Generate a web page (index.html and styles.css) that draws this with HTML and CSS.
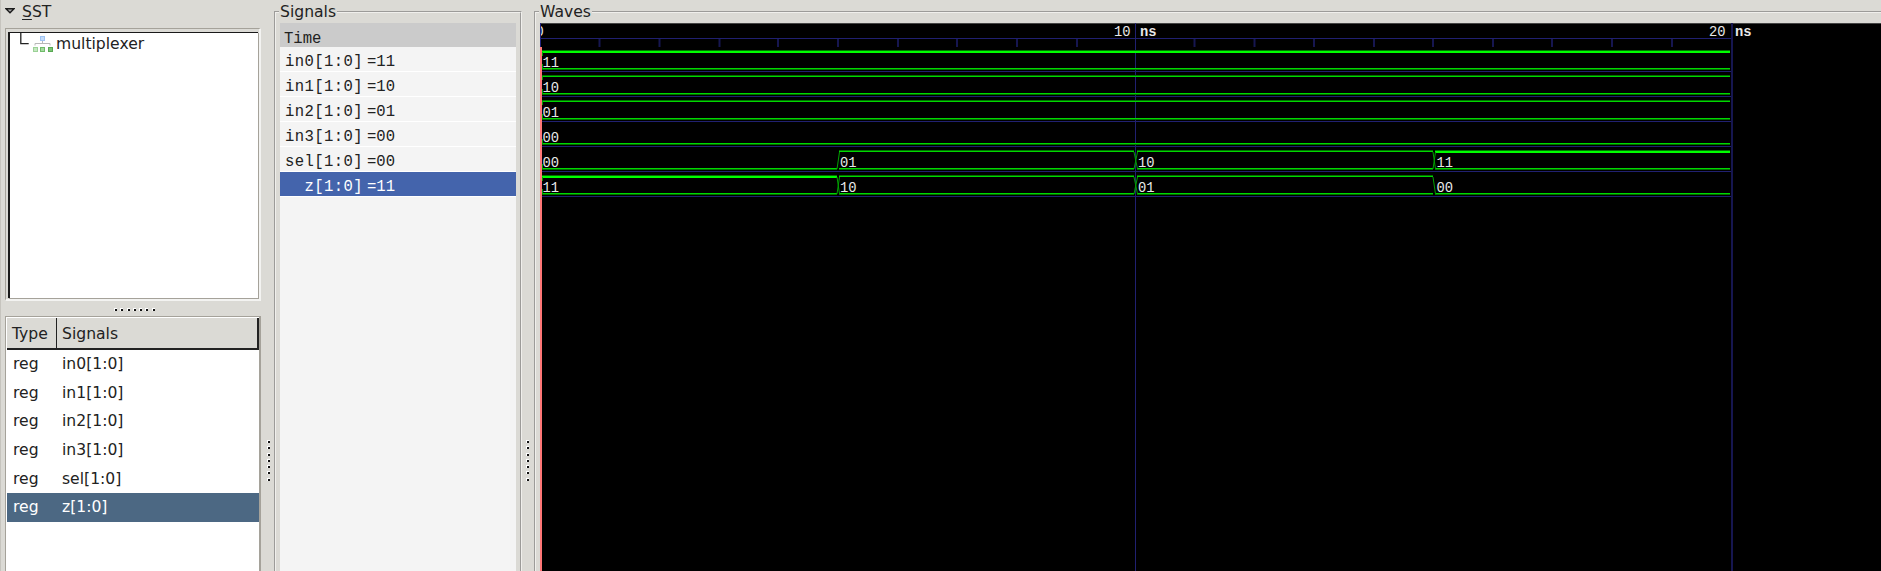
FILE: index.html
```html
<!DOCTYPE html>
<html lang="en">
<head>
<meta charset="utf-8">
<title>Waves</title>
<link rel="stylesheet" href="styles.css">
</head>
<body>
<div class="app">
  <aside class="sst">
    <div class="sst-title">
      <svg class="arrow" width="10" height="6" viewBox="0 0 10 6"><path d="M1 .8H9L5 4.8Z" fill="#aaa" stroke="#1c1c1c" stroke-width="1.4"/></svg>
      <span><u>S</u>ST</span>
    </div>
    <div class="tree">
      <div class="tree-in">
        <svg class="branch" width="43" height="22" viewBox="0 0 43 22">
          <path d="M10.8 0V10.7H18.7" fill="none" stroke="#222" stroke-width="1.3"/>
          <path d="M25 12.5V10.5H40V12.5M32.5 8V11" fill="none" stroke="#b8b8b8" stroke-width="1"/>
          <rect x="30.5" y="3.5" width="4" height="4" fill="#c5dcfa" stroke="#9fc4f3"/>
          <rect x="23.5" y="14.5" width="4" height="4" fill="#c4e8c0" stroke="#9bd196"/>
          <rect x="30.5" y="14.5" width="4" height="4" fill="#a5dba0" stroke="#70bb6a"/>
          <rect x="38.5" y="14.5" width="4" height="4" fill="#7cc576" stroke="#58a853"/>
        </svg>
        <span class="node">multiplexer</span>
      </div>
    </div>
    <div class="grip grip-h"><i></i><i></i><i></i><i></i><i></i><i></i><i></i></div>
    <div class="list">
      <div class="head"><span class="c1">Type</span><span class="c2">Signals</span></div>
      <div class="item"><span class="c1">reg</span><span class="c2">in0[1:0]</span></div>
      <div class="item"><span class="c1">reg</span><span class="c2">in1[1:0]</span></div>
      <div class="item"><span class="c1">reg</span><span class="c2">in2[1:0]</span></div>
      <div class="item"><span class="c1">reg</span><span class="c2">in3[1:0]</span></div>
      <div class="item"><span class="c1">reg</span><span class="c2">sel[1:0]</span></div>
      <div class="item on"><span class="c1">reg</span><span class="c2">z[1:0]</span></div>
    </div>
  </aside>
  <div class="grip grip-v"><i></i><i></i><i></i><i></i><i></i><i></i><i></i></div>
  <fieldset class="frame signals">
    <legend>Signals</legend>
    <div class="panel">
      <div class="time">Time</div>
      <div class="sig"><span class="name">in0[1:0]</span><span>=11</span></div>
      <div class="sig"><span class="name">in1[1:0]</span><span>=10</span></div>
      <div class="sig"><span class="name">in2[1:0]</span><span>=01</span></div>
      <div class="sig"><span class="name">in3[1:0]</span><span>=00</span></div>
      <div class="sig"><span class="name">sel[1:0]</span><span>=00</span></div>
      <div class="sig on"><span class="name">z[1:0]</span><span>=11</span></div>
    </div>
  </fieldset>
  <div class="grip grip-v g2"><i></i><i></i><i></i><i></i><i></i><i></i><i></i></div>
  <fieldset class="frame waves">
    <legend>Waves</legend>
    <svg class="canvas" width="1341" height="548" viewBox="540 23 1341 548">
      <path class="edge" d="M540 23.5H1881"/>
      <g class="blue">
        <path d="M540 38.5H1732M540 71.5H1732M540 96.5H1732M540 121.5H1732M540 146.5H1732M540 171.5H1732M540 196.5H1732"/>
        <path d="M1135.5 23V571"/>
        <path class="w2 tick" d="M1732 23V571M599.5 39V47M659.5 39V47M719.5 39V47M778 39V47M838 39V47M898 39V47M957 39V47M1017 39V47M1077 39V47M1194.5 39V47M1254.5 39V47M1314 39V47M1374 39V47M1433 39V47M1493 39V47M1552 39V47M1612 39V47M1672 39V47"/>
      </g>
      <g class="dim">
        <path d="M542 50.5H1730M1435 150.5H1730M542 175.5H837"/>
        <path d="M542 69.5H1730M542 94.5H1730M542 119.5H1730M542 144.5H1730M542 169.5H837M839 169.5H1134M1137 169.5H1433M1435 169.5H1730M542 194.5H837M839 194.5H1134M1137 194.5H1433M1435 194.5H1730"/>
        <path d="M542 75.5H1730M542 100.5H1730M839 150.5H1134M1137 150.5H1433M839 175.5H1134M1137 175.5H1433"/>
      </g>
      <g class="thick">
        <path d="M542 52H1730M1435 152H1730M542 177H837"/>
      </g>
      <g class="green">
        <path d="M542 68.5H1730M542 93.5H1730M542 118.5H1730M542 143.5H1730M542 168.5H837M839 168.5H1134M1137 168.5H1433M1435 168.5H1730M542 193.5H837M839 193.5H1134M1137 193.5H1433M1435 193.5H1730"/>
        <path d="M542 76.5H1730M542 101.5H1730M839 151.5H1134M1137 151.5H1433M839 176.5H1134M1137 176.5H1433"/>
      </g>
      <g class="cross">
        <path d="M837 169L839.5 152M837 177L839.5 194M839.5 177L837 194M1134 152L1137.5 169M1137.5 152L1134 169M1134 177L1137.5 194M1137.5 177L1134 194M1433 152L1435.5 169M1435.5 152L1433 169M1433 177L1435.5 194"/>
        <path d="M542.5 52V56M542.5 64V69M542.5 76V80M542.5 89V94M542.5 101V105M542.5 114V119M542.5 139V144M542.5 164V169M542.5 177V181M542.5 189V194"/>
      </g>
      <path class="cursor" d="M541 47V571"/>
      <g class="label">
        <text x="535.5" y="36">0</text>
        <text x="1114" y="36">10</text><text class="b" x="1140" y="36">ns</text>
        <text x="1709" y="36">20</text><text class="b" x="1735" y="36">ns</text>
        <text x="542.5" y="67">11</text>
        <text x="542.5" y="92">10</text>
        <text x="542.5" y="117">01</text>
        <text x="542.5" y="142">00</text>
        <text x="542.5" y="167">00</text><text x="840" y="167">01</text><text x="1138" y="167">10</text><text x="1436.5" y="167">11</text>
        <text x="542.5" y="192">11</text><text x="840" y="192">10</text><text x="1138" y="192">01</text><text x="1436.5" y="192">00</text>
      </g>
      <path class="start" d="M540.5 23V47"/>
    </svg>
  </fieldset>
</div>
</body>
</html>
```
FILE: styles.css
```css
* { box-sizing: border-box; }
body {
  margin: 0;
  background: #dbdad5;
  color: #222;
  font: 15.6px/20px "DejaVu Sans", sans-serif;
  overflow: hidden;
}
.app { display: flex; width: 1881px; height: 571px; overflow: hidden; }

.sst {
  width: 262px;
  flex: none;
  display: flex;
  flex-direction: column;
  border-left: 1px solid #c6c4be;
  padding-left: 4px;
}
.sst-title { height: 28px; display: flex; align-items: flex-start; padding-top: 2px; }
.arrow { margin: 6px 7px 0 0; }
.sst-title u { text-underline-offset: 2px; text-decoration-thickness: 1px; }
.tree {
  height: 273px;
  width: 256px;
  flex: none;
  border: 1px solid #a5a29a;
  border-right: 2px solid #f3f3f1;
  border-bottom: 2px solid #f3f3f1;
  padding: 3px 1px 1px 2px;
}
.tree-in {
  height: 100%;
  background: #fff;
  border: solid #1a1a1a;
  border-width: 1px 0 0 2px;
  box-shadow: 1px 1px 0 #a5a29a;
  display: flex;
  align-items: flex-start;
}
.branch { flex: none; margin-right: 3px; }
.node { padding-top: 1px; }
.grip { display: flex; }
.grip i {
  width: 3px;
  height: 3px;
  background: #111;
  border: solid #fff;
  border-width: 1px 0 0 1px;
}
.grip-h { height: 15px; gap: 3.3px; padding: 7px 0 0 109px; }
.list {
  flex: 1;
  width: 256px;
  background: #fff;
  border: 1px solid #a5a29a;
  border-right: 2px solid #a5a29a;
  border-bottom: 0;
  padding: 1px 0 0 1px;
}
.head { display: flex; height: 32px; line-height: 32px; background: #dbdad5; border-bottom: 2px solid #222; border-right: 2px solid #222; }
.c1 { width: 50px; padding-left: 6px; }
.head .c1 { border-right: 1px solid #222; padding-left: 5px; }
.c2 { padding-left: 5px; }
.head .c2 { padding-left: 5px; }
.item { display: flex; height: 28.7px; line-height: 29px; }
.item.on { background: #4c6883; color: #fff; }

.grip-v { width: 12px; flex: none; flex-direction: column; gap: 3.3px; padding: 440px 0 0 5px; }
.g2 { padding-left: 4px; }

.frame {
  min-width: 0;
  margin: 0;
  padding: 0 4px;
  height: 580px;
  border: 2px groove #f0efec;
  flex: none;
}
.frame legend { height: 23px; line-height: 25px; margin-left: -1px; padding: 0 1px; }
.signals { width: 248px; }
.panel { width: 236px; height: 548px; background: #f4f4f4; font: 15.6px/24px "Liberation Mono", monospace; }
.time { height: 24px; background: #cbcbcb; padding: 4px 0 0 4px; }
.sig { display: flex; height: 25px; border-bottom: 1px solid #fff; padding-left: 4px; line-height: 30px; }
.sig .name { width: 79px; text-align: right; margin-right: 4px; letter-spacing: .4px; }
.sig.on { background: #4464ac; color: #fff; }
.waves { width: 1360px; }
.canvas { display: block; background: #000; }
.canvas path { fill: none; stroke-width: 1; }
.edge { stroke: #444; }
.blue { stroke: #202070; }
.canvas .w2 { stroke-width: 2; }
.blue .tick { stroke: #161650; }
.start { stroke: #24247c; }
.green { stroke: #00d800; }
.dim { stroke: #007000; }
.thick { stroke: #0f0; }
.canvas .thick path { stroke-width: 2; }
.cross { stroke: #00a000; }
.canvas .cursor { stroke: #f77; stroke-width: 2; }
.label { fill: #e8e8e8; font: 13.8px "Liberation Mono", monospace; }
.label .b { font-weight: bold; }
```
